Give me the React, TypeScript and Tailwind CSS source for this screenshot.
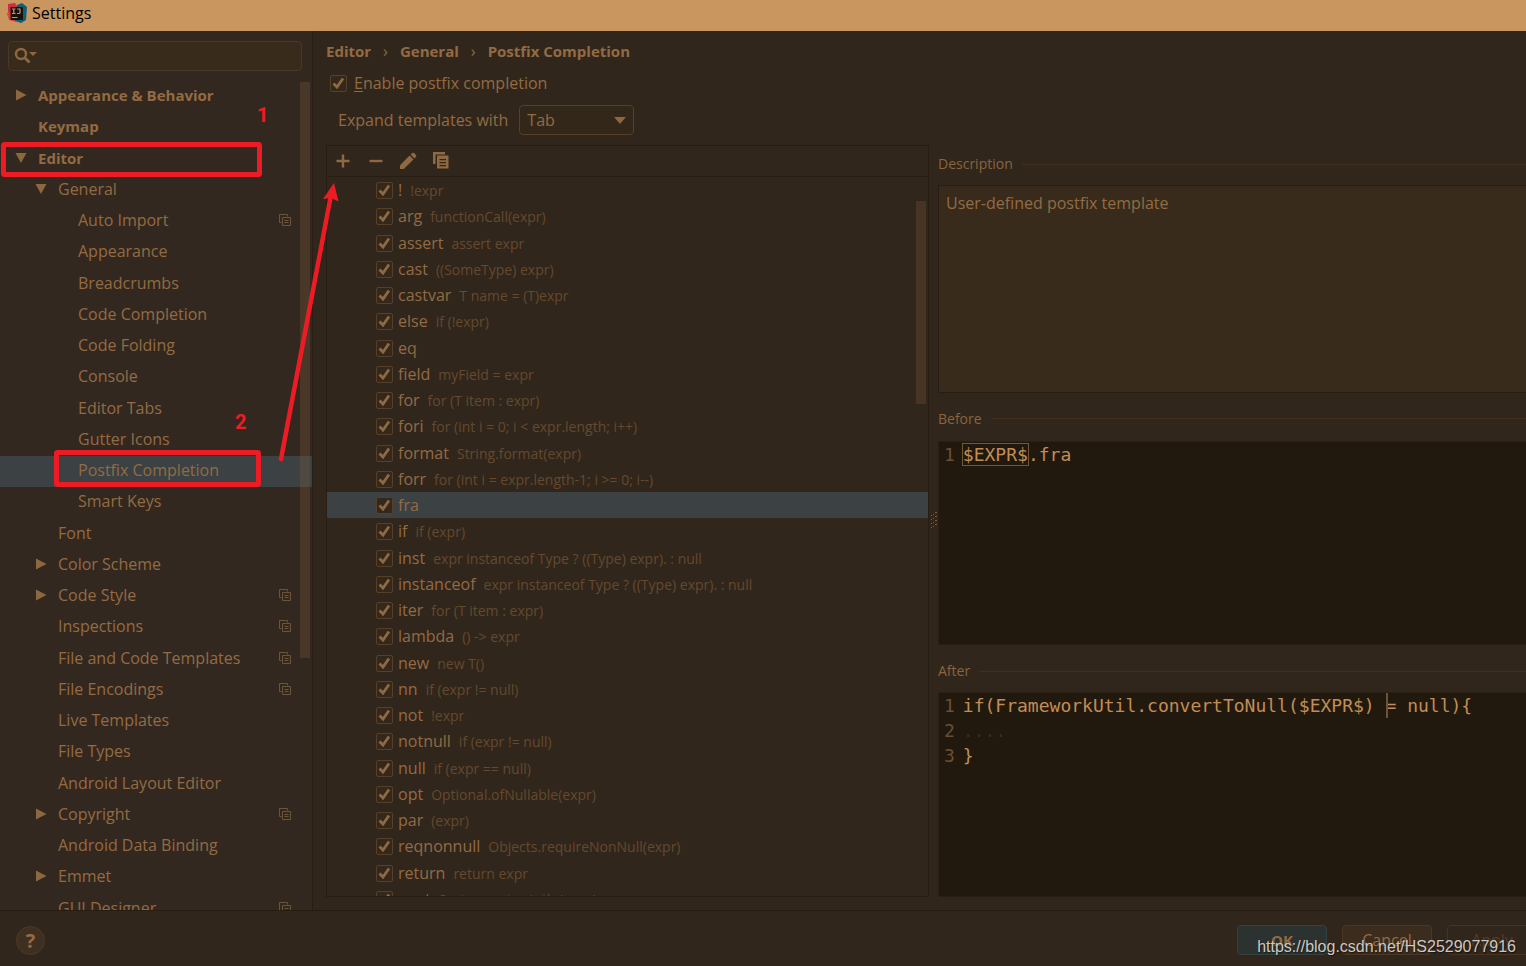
import React, { useState } from 'react';

interface TreeItem {
  label: string;
  level: 0 | 1 | 2;
  arrow?: 'open' | 'closed';
  project?: boolean;
}

const treeItems: TreeItem[] = [
  { label: 'Appearance & Behavior', level: 0, arrow: 'closed' },
  { label: 'Keymap', level: 0 },
  { label: 'Editor', level: 0, arrow: 'open' },
  { label: 'General', level: 1, arrow: 'open' },
  { label: 'Auto Import', level: 2, project: true },
  { label: 'Appearance', level: 2 },
  { label: 'Breadcrumbs', level: 2 },
  { label: 'Code Completion', level: 2 },
  { label: 'Code Folding', level: 2 },
  { label: 'Console', level: 2 },
  { label: 'Editor Tabs', level: 2 },
  { label: 'Gutter Icons', level: 2 },
  { label: 'Postfix Completion', level: 2 },
  { label: 'Smart Keys', level: 2 },
  { label: 'Font', level: 1 },
  { label: 'Color Scheme', level: 1, arrow: 'closed' },
  { label: 'Code Style', level: 1, arrow: 'closed', project: true },
  { label: 'Inspections', level: 1, project: true },
  { label: 'File and Code Templates', level: 1, project: true },
  { label: 'File Encodings', level: 1, project: true },
  { label: 'Live Templates', level: 1 },
  { label: 'File Types', level: 1 },
  { label: 'Android Layout Editor', level: 1 },
  { label: 'Copyright', level: 1, arrow: 'closed', project: true },
  { label: 'Android Data Binding', level: 1 },
  { label: 'Emmet', level: 1, arrow: 'closed' },
  { label: 'GUI Designer', level: 1, project: true },
];

const templates = [
  { name: '!', hint: '!expr' },
  { name: 'arg', hint: 'functionCall(expr)' },
  { name: 'assert', hint: 'assert expr' },
  { name: 'cast', hint: '((SomeType) expr)' },
  { name: 'castvar', hint: 'T name = (T)expr' },
  { name: 'else', hint: 'if (!expr)' },
  { name: 'eq', hint: '' },
  { name: 'field', hint: 'myField = expr' },
  { name: 'for', hint: 'for (T item : expr)' },
  { name: 'fori', hint: 'for (int i = 0; i < expr.length; i++)' },
  { name: 'format', hint: 'String.format(expr)' },
  { name: 'forr', hint: 'for (int i = expr.length-1; i >= 0; i--)' },
  { name: 'fra', hint: '' },
  { name: 'if', hint: 'if (expr)' },
  { name: 'inst', hint: 'expr instanceof Type ? ((Type) expr). : null' },
  { name: 'instanceof', hint: 'expr instanceof Type ? ((Type) expr). : null' },
  { name: 'iter', hint: 'for (T item : expr)' },
  { name: 'lambda', hint: '() -> expr' },
  { name: 'new', hint: 'new T()' },
  { name: 'nn', hint: 'if (expr != null)' },
  { name: 'not', hint: '!expr' },
  { name: 'notnull', hint: 'if (expr != null)' },
  { name: 'null', hint: 'if (expr == null)' },
  { name: 'opt', hint: 'Optional.ofNullable(expr)' },
  { name: 'par', hint: '(expr)' },
  { name: 'reqnonnull', hint: 'Objects.requireNonNull(expr)' },
  { name: 'return', hint: 'return expr' },
  { name: 'sout', hint: 'System.out.println(expr)' },
];

const indents = ['pl-[15px]', 'pl-[35px]', 'pl-[55px]'];

function TreeArrow({ state }: { state?: 'open' | 'closed' }) {
  return (
    <svg className="w-3 h-3 shrink-0 fill-[#8c673f]" viewBox="0 0 12 12" aria-hidden="true">
      {state === 'closed' && <path d="M1 0.5v11L11.5 6z" />}
      {state === 'open' && <path d="M0.5 1h11L6 11z" />}
    </svg>
  );
}

function ProjectIcon() {
  return (
    <svg
      className="w-3 h-3 shrink-0 stroke-[#6c5439]"
      viewBox="0 0 12 12"
      fill="none"
      aria-hidden="true"
    >
      <path d="M2.5 8.5h-2v-8h8v2" />
      <path d="M3.5 3.5h8v8h-8z" />
      <path d="M5.5 6.5h4M5.5 8.5h4" />
    </svg>
  );
}

function CheckBox({ id }: { id: string }) {
  return (
    <span className="relative w-[17px] h-[17px] shrink-0">
      <input
        id={id}
        type="checkbox"
        defaultChecked
        className="peer block appearance-none w-full h-full rounded-xs border border-[#573f28] bg-[#33281b]"
      />
      <svg
        className="hidden peer-checked:block absolute inset-0 w-full h-full pointer-events-none"
        viewBox="0 0 17 17"
        fill="none"
        stroke="#8f6941"
        strokeWidth="2.8"
        aria-hidden="true"
      >
        <path d="M3.500 8.500l3.500 3.500 6-8.500" />
      </svg>
    </span>
  );
}

function GroupTitle({ text }: { text: string }) {
  return (
    <div className="flex items-center gap-[9px] h-5 text-[14px] text-[#8a643e]">
      <h2>{text}</h2>
      <span className="flex-1 h-px bg-[#432f1e]" />
    </div>
  );
}

function Sidebar() {
  const [selected, setSelected] = useState('Postfix Completion');

  return (
    <aside className="relative w-[313px] shrink-0 flex flex-col overflow-hidden bg-[#33281f] border-r border-[#291e14]">
      <div className="flex items-center ml-2 mr-[10px] mt-[10px] h-[30px] shrink-0 px-[5px] rounded-sm border border-[#4b3726] bg-[#382b1c]">
        <svg className="w-6 h-5 shrink-0" viewBox="0 0 24 20" fill="none" aria-hidden="true">
          <circle cx="7" cy="8" r="5" stroke="#8c673f" strokeWidth="2.4" />
          <path d="M10.5 11.5l5 5" stroke="#8c673f" strokeWidth="2.8" />
          <path d="M15 6h8l-4 4z" fill="#8c673f" />
        </svg>
        <input
          type="text"
          aria-label="Search settings"
          className="flex-1 min-w-0 bg-transparent outline-none text-[#946c44]"
        />
      </div>

      <ul className="mt-[10px] flex-1 min-h-0 overflow-hidden">
        {treeItems.map((item) => (
          <li key={item.label} className="h-[31px] nth-[4n+2]:h-8">
            <button
              onClick={() => setSelected(item.label)}
              className={`w-full h-[31px] flex items-center gap-[11px] pr-[21px] pb-[3px] text-left whitespace-nowrap ${
                indents[item.level]
              } ${item.level === 0 ? 'font-bold text-[15px]' : ''} ${
                selected === item.label ? 'bg-[#3c4143]' : ''
              }`}
            >
              <TreeArrow state={item.arrow} />
              <span className="flex-1">{item.label}</span>
              {item.project && <ProjectIcon />}
            </button>
          </li>
        ))}
      </ul>

      {/* Scrollbar thumb */}
      <div className="absolute right-[2px] top-[51px] w-[10px] h-[576px] bg-[#8a6440]/25" />
    </aside>
  );
}

function TemplateList() {
  const [selected, setSelected] = useState('fra');

  return (
    <section className="relative w-[603px] shrink-0 flex flex-col border border-[#281d12]">
      <div className="flex items-center gap-[13px] h-[31px] shrink-0 pl-[6px] border-b border-[#281d12] text-[#8f6941]">
        <button aria-label="Add" className="w-5 h-5">
          <svg viewBox="0 0 20 20" fill="none" stroke="currentColor" strokeWidth="2.4">
            <path d="M10 3.5v13M3.5 10h13" />
          </svg>
        </button>
        <button aria-label="Remove" className="w-5 h-5">
          <svg viewBox="0 0 20 20" fill="none" stroke="currentColor" strokeWidth="2.4">
            <path d="M3.5 10h13" />
          </svg>
        </button>
        <button aria-label="Edit" className="w-5 h-5">
          <svg viewBox="0 0 20 20" fill="currentColor">
            <path d="M1 14.200L10.600 4.600l3.800 3.800L4.800 18H1z" />
            <path d="M11.600 3.600l1.500-1.500q1-.8 2 0l1.800 1.800q.8 1 0 2l-1.500 1.500z" />
          </svg>
        </button>
        <button aria-label="Duplicate" className="w-5 h-5">
          <svg viewBox="0 0 20 20">
            <path d="M1 1h12v2.500H3.500v9.500H1z" fill="currentColor" />
            <path
              d="M5 4.500h11.500v13H5zM7.500 8v1.300h6.500V8zM7.500 11v1.300h6.500V11zM7.500 14v1.300h6.500V14z"
              fill="currentColor"
              fillRule="evenodd"
            />
          </svg>
        </button>
      </div>

      <ul className="flex-1 min-h-0 overflow-hidden">
        {templates.map((item) => (
          <li
            key={item.name}
            onClick={() => setSelected(item.name)}
            className={`flex items-center gap-[5px] h-[26px] nth-[4n+2]:h-[27px] pl-[49px] whitespace-nowrap ${
              selected === item.name ? 'bg-[#3c4143]' : ''
            }`}
          >
            <CheckBox id={`tpl-${item.name}`} />
            <label htmlFor={`tpl-${item.name}`} className="flex items-baseline gap-2">
              <span>{item.name}</span>
              <span className="text-[14px] text-[#64492e]">{item.hint}</span>
            </label>
          </li>
        ))}
      </ul>

      {/* Scrollbar thumb */}
      <div className="absolute right-[2px] top-[55px] w-[10px] h-[203px] bg-[#483425]" />
    </section>
  );
}

function Previews() {
  return (
    <section className="flex-1 min-w-0 flex flex-col pt-[9px]">
      <GroupTitle text="Description" />
      <div className="mt-[11px] flex-1 px-[7px] pt-[3px] bg-[#382b1c] border border-r-0 border-[#281d12]">
        <p className="mt-1">User-defined postfix template</p>
      </div>

      <div className="mt-4">
        <GroupTitle text="Before" />
      </div>
      <div className="mt-3 flex-1 flex gap-2 pl-[5px] bg-[#21190e] border border-r-0 border-[#2a1f13] font-['DejaVu_Sans_Mono',monospace] text-[18px] leading-[25px] text-[#c18d55]">
        <span className="text-[#6b4f33]">1</span>
        <code className="font-[inherit]">
          <span className="outline outline-[#745536]">$EXPR$</span>.fra
        </code>
      </div>

      <div className="mt-4">
        <GroupTitle text="After" />
      </div>
      <div className="mt-[11px] flex-1 flex gap-2 pl-[5px] bg-[#21190e] border border-r-0 border-[#2a1f13] font-['DejaVu_Sans_Mono',monospace] text-[18px] leading-[25px] text-[#c18d55] whitespace-pre">
        <div className="text-[#6b4f33]">
          <div>1</div>
          <div>2</div>
          <div>3</div>
        </div>
        <code className="font-[inherit]">
          <div className="flex">
            <span>if(FrameworkUtil.convertToNull($EXPR$)</span>
            <span> </span>
            <span className="relative">
              <span className="absolute left-0 top-0 w-[2px] h-[25px] bg-[#6f5235]" />= null)&#123;
            </span>
          </div>
          <div className="text-[#3d2d1c]">....</div>
          <div>&#125;</div>
        </code>
      </div>
    </section>
  );
}

function Annotations() {
  return (
    <div className="absolute inset-0 pointer-events-none font-['Roboto',sans-serif] font-bold text-[20px] leading-5 text-[#ed1c24]">
      <svg className="w-full h-full" fill="none" stroke="#ed1c24" aria-hidden="true">
        <rect x="3.5" y="144.5" width="256" height="30" strokeWidth="5" rx="1" />
        <rect x="56.5" y="452.5" width="202" height="32" strokeWidth="5" rx="1" />
        <path d="M281 459L331 195" strokeWidth="4.5" strokeLinecap="round" />
        <path d="M334 183l4.500 18.500-7.500-3.500-8 1z" fill="#ed1c24" stroke="none" />
      </svg>
      <span className="absolute left-[257px] top-[105px]">1</span>
      <span className="absolute left-[235px] top-[412px]">2</span>
    </div>
  );
}

export default function App() {
  return (
    <div className="relative h-screen flex flex-col overflow-hidden bg-[#31261b] font-['Open_Sans','Noto_Sans',sans-serif] text-[16px] leading-5 text-[#936b43]">
      <header className="flex items-center gap-[5px] h-[31px] shrink-0 pl-[7px] pb-[6px] bg-[#c99660] text-black">
        <svg className="w-5 h-5" viewBox="0 0 20 20" aria-hidden="true">
          <path d="M1 1l8 1 2 8-2 9-7-2L0 11l2-4z" fill="#e0452f" />
          <path d="M1 1l7-1 3 5-7 6-3-3z" fill="#d02c4b" />
          <path d="M10 2l5-2 5 4-1 13-5 3-6-2z" fill="#0d6078" />
          <path d="M3.5 4H16v13H3.5z" fill="#17100c" />
          <path
            d="M5 6h3.500M6.800 6v4.500M5 10.500h3.500M10 6h3v3.500q0 1-1.200 1H10M5 14.500h5.500"
            fill="none"
            stroke="#c99660"
            strokeWidth="1.2"
          />
        </svg>
        <h1>Settings</h1>
      </header>

      <div className="flex-1 min-h-0 flex">
        <Sidebar />

        <main className="flex-1 min-w-0 flex flex-col pl-[13px] pb-[13px]">
          <nav
            aria-label="Breadcrumb"
            className="flex items-center gap-3 mt-[10px] h-5 font-bold text-[15px]"
          >
            <a href="#editor">Editor</a>
            <span className="font-normal text-[16px]">›</span>
            <a href="#general">General</a>
            <span className="font-normal text-[16px]">›</span>
            <a href="#postfix">Postfix Completion</a>
          </nav>

          <div className="flex items-center gap-[7px] mt-3 h-5 pl-1">
            <CheckBox id="enable-postfix" />
            <label htmlFor="enable-postfix">
              <span className="underline underline-offset-2">E</span>nable postfix completion
            </label>
          </div>

          <div className="flex items-center gap-[11px] mt-3 h-[30px] pl-3">
            <label htmlFor="expand-with">Expand templates with</label>
            <div className="relative">
              <select
                id="expand-with"
                className="appearance-none w-[115px] h-[30px] pl-[7px] rounded-sm border border-[#573f28] bg-[#33271a]"
              >
                <option>Tab</option>
                <option>Space</option>
                <option>Enter</option>
              </select>
              <svg
                className="absolute right-2 top-[12px] w-3 h-[7px] pointer-events-none fill-[#8c673f]"
                viewBox="0 0 12 7"
                aria-hidden="true"
              >
                <path d="M0 0h12L6 7z" />
              </svg>
            </div>
          </div>

          <div className="flex-1 min-h-0 flex mt-[10px]">
            <TemplateList />
            {/* Splitter grip */}
            <div className="w-[9px] shrink-0 flex items-center justify-center">
              <svg className="w-[6px] h-[18px]" viewBox="0 0 6 18" fill="#7d5c3a" aria-hidden="true">
                {[0, 4, 8, 12].map((y) => (
                  <path key={y} d={`M4 ${y}h2v1H4zM2 ${y + 2}h1v1H2zM0 ${y + 3}h1v1H0z`} />
                ))}
              </svg>
            </div>
            <Previews />
          </div>
        </main>
      </div>

      <footer className="flex items-center gap-[15px] h-14 shrink-0 pl-4 pt-[2px] border-t border-[#271c11]">
        <button
          aria-label="Help"
          className="w-[29px] h-[29px] mt-[2px] rounded-full border border-[#4f3924] bg-[#3f2f20] font-bold text-[20px] leading-5"
        >
          ?
        </button>
        <div className="flex-1" />
        <button className="w-[90px] h-[30px] shrink-0 rounded-sm border border-[#304340] bg-[#2c3230] font-bold text-[15px]">
          OK
        </button>
        <button className="w-[90px] h-[30px] shrink-0 rounded-sm border border-[#4d3723] bg-[#3c2c1e]">
          Cancel
        </button>
        <button className="w-[90px] h-[30px] shrink-0 -mr-[11px] rounded-sm border border-[#48331f] text-[#553c25]">
          Apply
        </button>
      </footer>

      <Annotations />
      <span className="absolute right-[10px] bottom-[9px] font-['Liberation_Sans',sans-serif] text-[16px] text-[#cdc8c2] [text-shadow:1px_1px_1px_#0008]">
        https://blog.csdn.net/HS2529077916
      </span>
    </div>
  );
}
